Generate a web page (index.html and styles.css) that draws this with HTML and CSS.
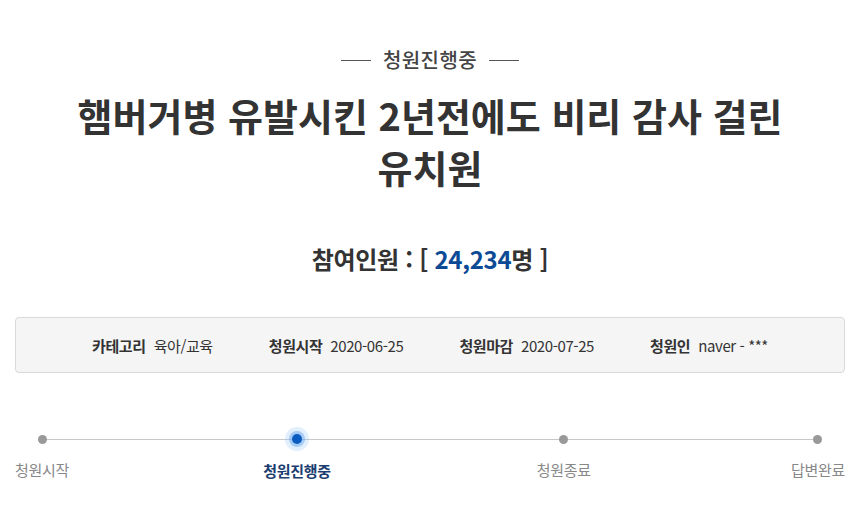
FILE: index.html
```html
<!DOCTYPE html>
<html lang="ko">
<head>
<meta charset="utf-8">
<link rel="stylesheet" href="styles.css">
</head>
<body>
<div class="page">
  <div class="status"><span class="dash"></span><span class="status-text">청원진행중</span><span class="dash"></span></div>
  <h1 class="title">햄버거병 유발시킨 2년전에도 비리 감사 걸린 유치원</h1>
  <p class="count">참여인원 : [ <span class="num">24,234</span>명 ]</p>
  <ul class="info">
    <li><strong>카테고리</strong>육아/교육</li>
    <li><strong>청원시작</strong>2020-06-25</li>
    <li><strong>청원마감</strong>2020-07-25</li>
    <li><strong>청원인</strong>naver - ***</li>
  </ul>
  <div class="progress">
    <div class="track"></div>
    <div class="step"><span class="dot"></span><span class="label">청원시작</span></div>
    <div class="step active"><span class="dot"></span><span class="label">청원진행중</span></div>
    <div class="step"><span class="dot"></span><span class="label">청원종료</span></div>
    <div class="step"><span class="dot"></span><span class="label">답변완료</span></div>
  </div>
</div>
</body>
</html>
```

FILE: styles.css
```css
* { box-sizing: border-box; }
html, body { margin: 0; padding: 0; background: #fff; }
body {
  font-family: "Noto Sans CJK KR", "Noto Sans", sans-serif;
  color: #333;
  width: 859px;
}
.page { padding: 0 14px 0 15px; }
.status {
  display: flex;
  justify-content: center;
  align-items: center;
  gap: 12px;
  padding-top: 46px;
  height: 74px;
  line-height: 28px;
}
.status-text { font-size: 20px; color: #444; font-weight: 500; letter-spacing: 0.4px; }
.dash { width: 30px; height: 1px; background: #555; }
.title {
  margin: 15px auto 0;
  width: 760px;
  text-align: center;
  font-size: 38px;
  line-height: 52px;
  font-weight: 700;
  color: #333;
  letter-spacing: 0;
  word-break: keep-all;
}
.count {
  margin: 48px 0 0;
  text-align: center;
  font-size: 24px;
  line-height: 36px;
  font-weight: 700;
  color: #333;
  letter-spacing: -0.3px;
}
.num { color: #0c4a95; }
.info {
  list-style: none;
  margin: 40px 0 0;
  padding: 0;
  height: 56px;
  display: flex;
  justify-content: center;
  align-items: center;
  gap: 56px;
  background: #f5f5f5;
  border: 1px solid #d9d9d9;
  border-radius: 4px;
  font-size: 15px;
  color: #333;
}
.info li { white-space: nowrap; letter-spacing: -0.4px; }
.info strong { font-weight: 700; margin-right: 8px; }
.progress {
  position: relative;
  margin-top: 56px;
  display: flex;
  justify-content: space-between;
}
.track {
  position: absolute;
  left: 27px;
  right: 28px;
  top: 10px;
  height: 1px;
  background: #c8c8c8;
}
.step {
  position: relative;
  display: flex;
  flex-direction: column;
  align-items: center;
}
.step:nth-child(3) { left: -6px; }
.dot {
  width: 9px;
  height: 9px;
  margin: 6px 0;
  border-radius: 50%;
  background: #999;
  position: relative;
}
.active .dot {
  background: #0a5cc0;
  width: 10px;
  height: 10px;
  margin: 5px 0 7px;
  box-shadow: 0 0 0 3px rgba(90, 160, 240, 0.45), 0 0 0 7px rgba(140, 190, 245, 0.25);
}
.label {
  margin-top: 9px;
  font-size: 15px;
  line-height: 22px;
  color: #888;
  letter-spacing: -0.3px;
}
.active .label { color: #1b3d70; font-weight: 700; }
```
